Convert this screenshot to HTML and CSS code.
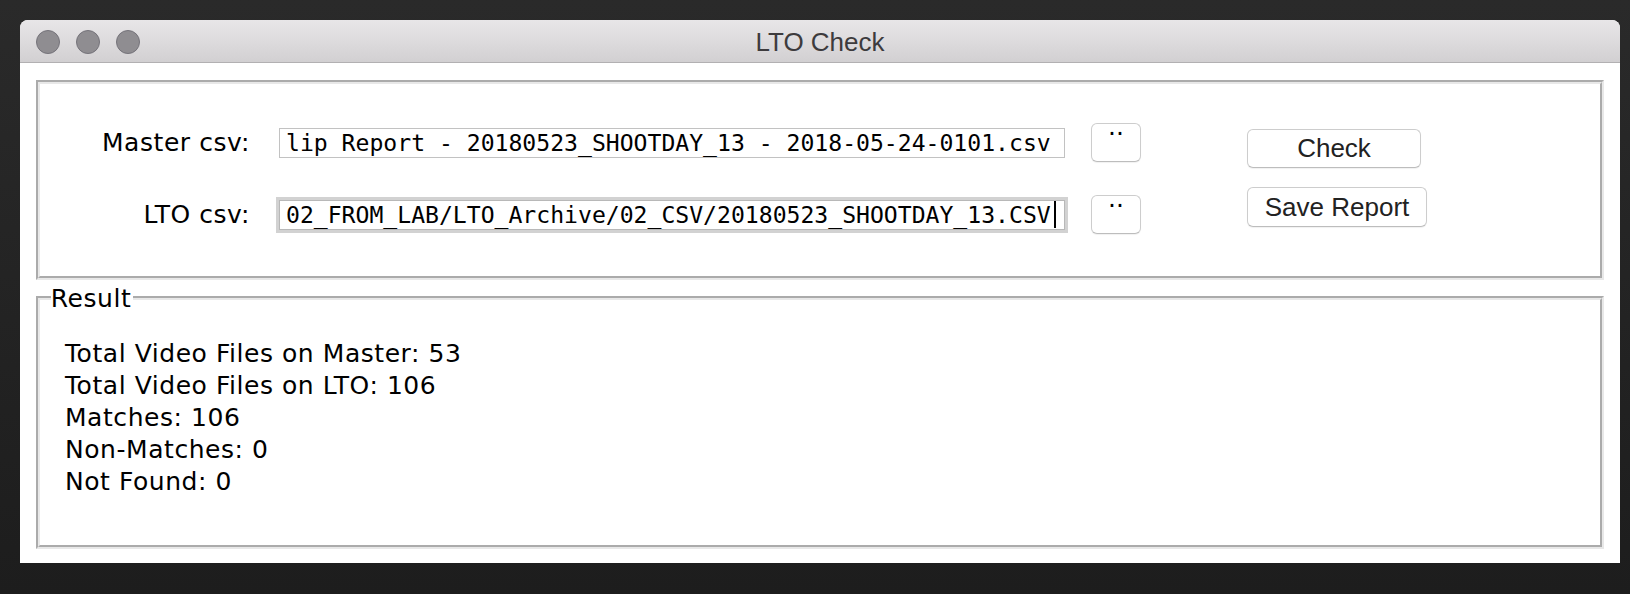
FILE: index.html
```html
<!DOCTYPE html>
<html>
<head>
<meta charset="utf-8">
<title>LTO Check</title>
<link rel="stylesheet" href="styles.css">
</head>
<body>
<div class="window">
  <div class="titlebar">
    <div class="lights">
      <span class="light"></span>
      <span class="light"></span>
      <span class="light"></span>
    </div>
    <div class="title">LTO Check</div>
  </div>
  <div class="content">
    <div class="groove top-frame">
      <div class="groove-inner top-inner">
        <div class="fields">
          <div class="row">
            <div class="label">Master csv:</div>
            <div class="entry">lip Report - 20180523_SHOOTDAY_13 - 2018-05-24-0101.csv</div>
            <button class="btn dots">..</button>
          </div>
          <div class="row">
            <div class="label">LTO csv:</div>
            <div class="entry focused">02_FROM_LAB/LTO_Archive/02_CSV/20180523_SHOOTDAY_13.CSV<span class="caret"></span></div>
            <button class="btn dots">..</button>
          </div>
        </div>
        <div class="actions">
          <button class="btn action check">Check</button>
          <button class="btn action save">Save Report</button>
        </div>
      </div>
    </div>
    <div class="groove result-frame">
      <div class="legend">Result</div>
      <div class="groove-inner result-inner">
        <div class="line">Total Video Files on Master: 53</div>
        <div class="line">Total Video Files on LTO: 106</div>
        <div class="line">Matches: 106</div>
        <div class="line">Non-Matches: 0</div>
        <div class="line">Not Found: 0</div>
      </div>
    </div>
  </div>
</div>
</body>
</html>
```

FILE: styles.css
```css
* { box-sizing: border-box; }
html, body { margin: 0; padding: 0; }
body {
  width: 1630px;
  height: 594px;
  background: linear-gradient(#2a2a2a, #1d1d1d);
  padding: 20px 10px 0 20px;
  overflow: hidden;
}
.window {
  width: 1600px;
  height: 543px;
  background: #fff;
  border-radius: 8px 8px 0 0;
  overflow: hidden;
  display: flex;
  flex-direction: column;
}
.titlebar {
  height: 43px;
  flex: none;
  background: linear-gradient(#e8e6e8, #d2d0d2);
  border-bottom: 1px solid #b2b0b2;
  display: flex;
  align-items: center;
  position: relative;
}
.lights {
  display: flex;
  gap: 16px;
  padding-left: 16px;
  padding-top: 2px;
}
.light {
  width: 24px;
  height: 24px;
  border-radius: 50%;
  background: #8f8d91;
  border: 1px solid #75737a;
}
.title {
  position: absolute;
  left: 0;
  right: 0;
  top: 0;
  bottom: 0;
  display: flex;
  align-items: center;
  justify-content: center;
  font-family: "Liberation Sans", Arial, sans-serif;
  font-size: 26px;
  color: #3d3b3d;
  padding-top: 2px;
}
.content {
  flex: 1;
  padding: 17px 16px 14px 16px;
  display: flex;
  flex-direction: column;
  gap: 16px;
}
.groove {
  border: 2px solid;
  border-color: #ababab #e8e8e8 #e8e8e8 #ababab;
}
.groove-inner {
  border: 2px solid;
  border-color: #e8e8e8 #ababab #ababab #e8e8e8;
  height: 100%;
}
.top-frame { height: 200px; }
.top-inner {
  display: flex;
  align-items: flex-start;
  padding-top: 39px;
}
.fields {
  display: flex;
  flex-direction: column;
  gap: 33px;
}
.row {
  display: flex;
  align-items: center;
  height: 39px;
}
.label {
  width: 210px;
  text-align: right;
  font-family: "DejaVu Sans", sans-serif;
  font-size: 25px;
  letter-spacing: 0.55px;
  color: #000;
  line-height: 1;
}
.entry {
  margin-left: 29px;
  width: 786px;
  height: 30px;
  border: 1px solid #c2c2c2;
  background: #fff;
  font-family: "DejaVu Sans Mono", monospace;
  font-size: 23.1px;
  color: #000;
  padding-left: 6px;
  display: flex;
  align-items: center;
  white-space: pre;
  overflow: hidden;
}
.entry.focused {
  border-color: #b8b8b8;
  box-shadow: 0 0 0 3px #d2d2d2;
}
.caret {
  display: inline-block;
  width: 2px;
  height: 27px;
  background: #000;
  margin-left: 3px;
}
.btn {
  background: #fff;
  border: 1px solid #cdcdcd;
  border-bottom-color: #bdbdbd;
  border-radius: 6px;
  box-shadow: 0 1px 1px rgba(0,0,0,0.06);
  padding: 0;
  margin: 0;
  color: #222;
}
.dots {
  margin-left: 26px;
  width: 50px;
  height: 39px;
  font-family: "DejaVu Sans", sans-serif;
  font-size: 25px;
  line-height: 6px;
  display: flex;
  justify-content: center;
  align-items: flex-start;
  color: #000;
}
.actions {
  margin-left: 106px;
  margin-top: 6px;
  display: flex;
  flex-direction: column;
  align-items: flex-start;
  gap: 19px;
}
.action {
  height: 39px;
  font-family: "Liberation Sans", Arial, sans-serif;
  font-size: 26px;
  display: flex;
  align-items: center;
  justify-content: center;
}
.check { width: 174px; }
.save { width: 180px; height: 40px; }
.result-frame {
  flex: 1;
  position: relative;
}
.legend {
  position: absolute;
  left: 12.7px;
  top: -12px;
  background: #fff;
  font-family: "DejaVu Sans", sans-serif;
  font-size: 25px;
  letter-spacing: 0.55px;
  line-height: 25px;
  padding: 0 2px 0 0;
  color: #000;
}
.result-inner {
  padding: 38px 0 0 25px;
  font-family: "DejaVu Sans", sans-serif;
  font-size: 25px;
  letter-spacing: 0.55px;
  line-height: 32px;
  color: #000;
}
```
